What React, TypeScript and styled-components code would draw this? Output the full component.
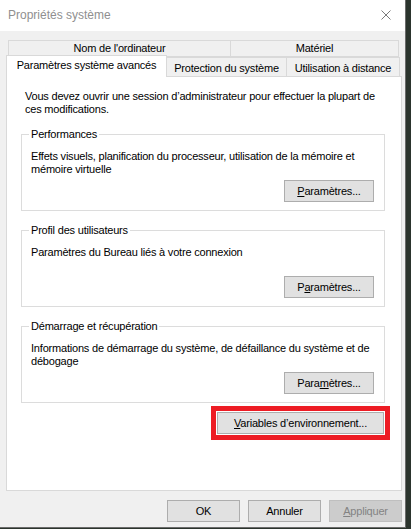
import React from 'react';
import styled, { createGlobalStyle } from 'styled-components';

const Global = createGlobalStyle`
	html, body {
		margin: 0;
		padding: 0;
		background: #2b342d;
	}
	* {
		box-sizing: border-box;
	}
`;

const Window = styled.div`
	width: 406px;
	height: 528px;
	background: #f0f0f0;
	border-right: 1px solid #6b6b6b;
	border-bottom: 1px solid #6b6b6b;
	display: flex;
	flex-direction: column;
	font-family: 'Liberation Sans', Arial, sans-serif;
	font-size: 11px;
	letter-spacing: -0.2px;
	color: #000;
`;

const TitleBar = styled.div`
	height: 31px;
	background: #fff;
	display: flex;
	align-items: center;
	justify-content: space-between;
	padding: 0 14px 2px 8px;
`;

const Title = styled.span`
	font-size: 12px;
	letter-spacing: 0;
	color: #8f8f8f;
`;

const Body = styled.div`
	padding: 9px 0 0 6px;
	display: flex;
	flex-direction: column;
`;

const TabRow = styled.div<{ $back?: boolean }>`
	display: flex;
	align-items: flex-end;
	height: ${(p) => (p.$back ? '17px' : '19px')};
	margin-left: ${(p) => (p.$back ? '2px' : '0')};
`;

const Tab = styled.div<{ $w: number; $active?: boolean; $back?: boolean }>`
	width: ${(p) => p.$w}px;
	height: ${(p) => (p.$active ? '22px' : p.$back ? '17px' : '19px')};
	margin-left: -1px;
	margin-bottom: ${(p) => (p.$active ? '-1px' : '0')};
	&:first-child {
		margin-left: 0;
	}
	border: 1px solid #d9d9d9;
	border-bottom: ${(p) => (p.$back ? '1px solid #d9d9d9' : 'none')};
	background: ${(p) => (p.$active ? '#fff' : '#f0f0f0')};
	position: relative;
	z-index: ${(p) => (p.$active ? 1 : 0)};
	display: flex;
	align-items: center;
	justify-content: center;
	padding-top: ${(p) => (p.$active ? '0' : p.$back ? '0' : '2px')};
	padding-bottom: ${(p) => (p.$active ? '2px' : '0')};
	line-height: 13px;
	white-space: nowrap;
`;

const Panel = styled.div`
	width: 396px;
	height: 415px;
	background: #fff;
	border: 1px solid #d9d9d9;
	padding: 13px 16px 0 14px;
	display: flex;
	flex-direction: column;
`;

const Intro = styled.p`
	margin: 0 0 12px 4px;
	line-height: 13px;
`;

const Group = styled.fieldset<{ $first?: boolean }>`
	margin: ${(p) => (p.$first ? '0' : '13px')} 0 0 0;
	padding: 0 9px 8px 9px;
	border: 1px solid #dcdcdc;
	display: flex;
	flex-direction: column;
	min-inline-size: 0;
`;

const Legend = styled.legend`
	padding: 0 2px;
	margin-left: -2px;
	line-height: 13px;
`;

const Desc = styled.div`
	margin-top: 9px;
	min-height: 26px;
	line-height: 13px;
`;

const Button = styled.button<{ $w: number; $disabled?: boolean }>`
	width: ${(p) => p.$w}px;
	height: 22px;
	padding: 0;
	font-family: inherit;
	font-size: 11px;
	letter-spacing: inherit;
	color: ${(p) => (p.$disabled ? '#838383' : '#000')};
	background: ${(p) => (p.$disabled ? '#cccccc' : '#e1e1e1')};
	border: 1px solid ${(p) => (p.$disabled ? '#bfbfbf' : '#adadad')};
	border-radius: 0;
	line-height: 18px;
`;

const GroupButton = styled(Button)`
	align-self: flex-end;
	margin-top: 4px;
	margin-right: 1px;
`;

const Highlight = styled.div`
	align-self: flex-end;
	margin: 3px -5px 0 0;
	border: 5px solid #ed1c24;
	padding: 1px;
	display: flex;
`;

const Key = styled.span`
	text-decoration: underline;
	text-underline-offset: 1px;
`;

const ButtonBar = styled.div`
	display: flex;
	justify-content: flex-end;
	gap: 8px;
	margin-top: 9px;
	padding-right: 3px;
`;

const Close = () => (
	<svg width="10" height="10" viewBox="0 0 10 10">
		<path d="M0.5 0.5 L9.5 9.5 M9.5 0.5 L0.5 9.5" stroke="#7a7a7a" strokeWidth="1" fill="none" />
	</svg>
);

const groups = [
	{
		title: 'Performances',
		text: "Effets visuels, planification du processeur, utilisation de la mémoire et mémoire virtuelle",
		btn: (
			<>
				<Key>P</Key>aramètres...
			</>
		)
	},
	{
		title: 'Profil des utilisateurs',
		text: 'Paramètres du Bureau liés à votre connexion',
		btn: (
			<>
				P<Key>a</Key>ramètres...
			</>
		)
	},
	{
		title: 'Démarrage et récupération',
		text: 'Informations de démarrage du système, de défaillance du système et de débogage',
		btn: (
			<>
				Para<Key>m</Key>ètres...
			</>
		)
	}
];

export default function App() {
	return (
		<>
			<Global />
			<Window>
				<TitleBar>
					<Title>Propriétés système</Title>
					<Close />
				</TitleBar>
				<Body>
					<TabRow $back>
						<Tab $back $w={223}>Nom de l'ordinateur</Tab>
						<Tab $back $w={169}>Matériel</Tab>
					</TabRow>
					<TabRow>
						<Tab $active $w={161}>Paramètres système avancés</Tab>
						<Tab $w={121}>Protection du système</Tab>
						<Tab $w={114}>Utilisation à distance</Tab>
					</TabRow>
					<Panel>
						<Intro>
							Vous devez ouvrir une session d’administrateur pour effectuer la plupart de ces modifications.
						</Intro>
						{groups.map((g, i) => (
							<Group key={g.title} $first={i === 0}>
								<Legend>{g.title}</Legend>
								<Desc>{g.text}</Desc>
								<GroupButton $w={90}>{g.btn}</GroupButton>
							</Group>
						))}
						<Highlight>
							<Button $w={167}>
								<Key>V</Key>ariables d’environnement...
							</Button>
						</Highlight>
					</Panel>
					<ButtonBar>
						<Button $w={73}>OK</Button>
						<Button $w={73}>Annuler</Button>
						<Button $w={73} $disabled>
							<Key>A</Key>ppliquer
						</Button>
					</ButtonBar>
				</Body>
			</Window>
		</>
	);
}
